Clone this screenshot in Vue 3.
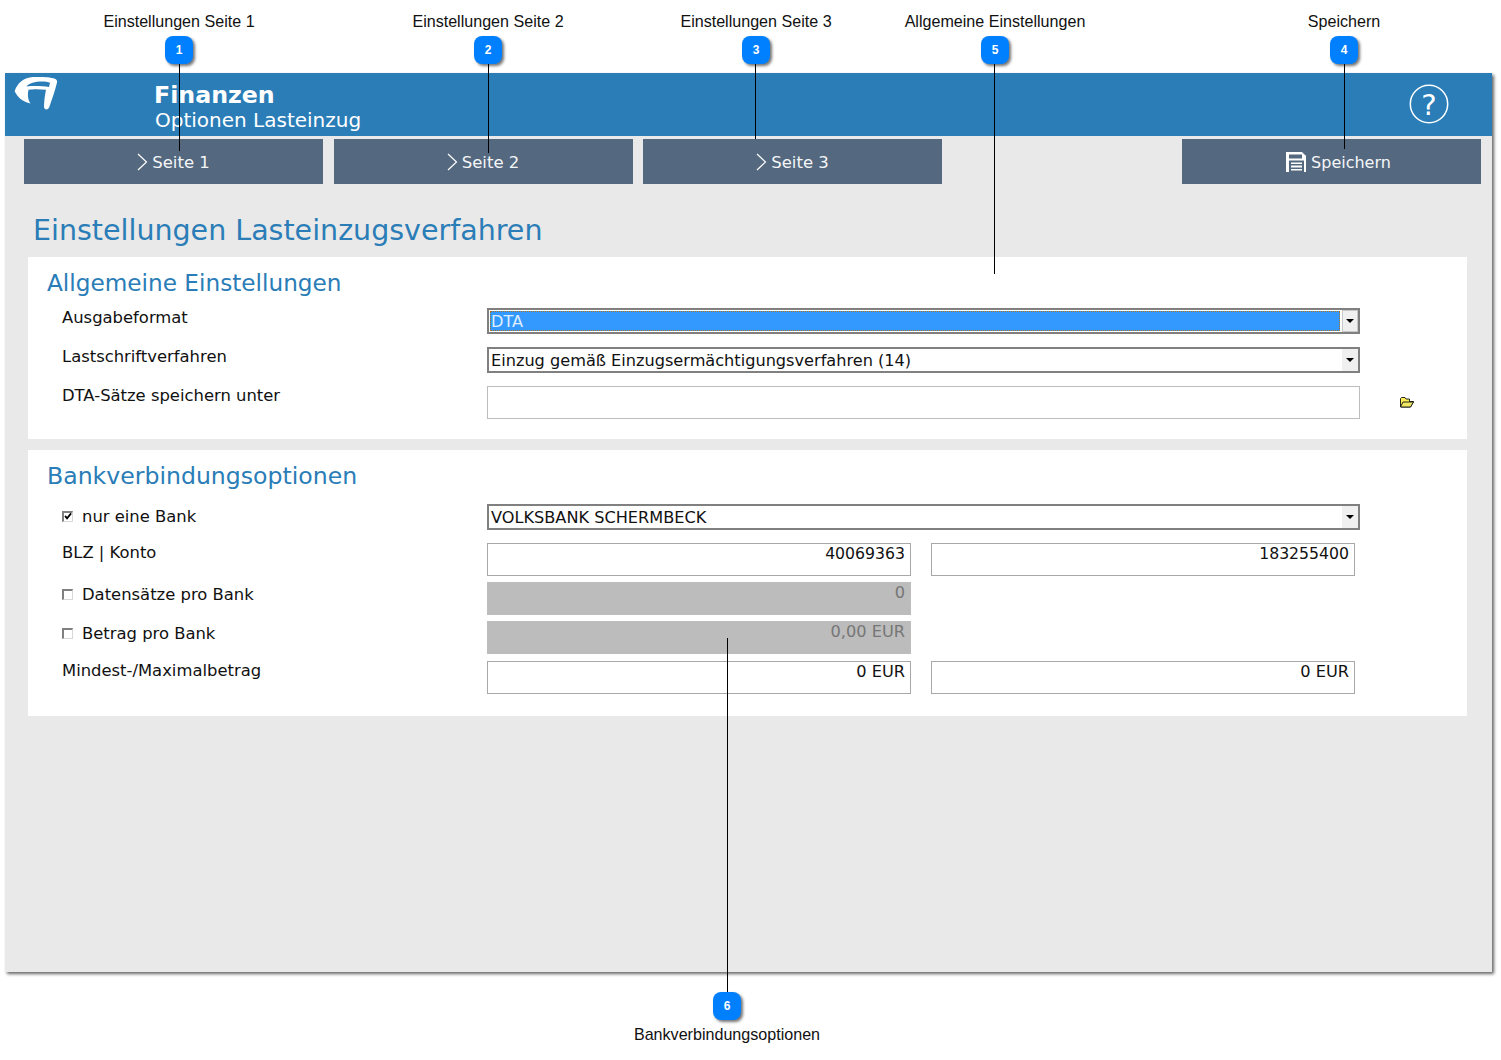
<script setup>
const callouts = [
  { n: 1, label: 'Einstellungen Seite 1', x: 179, lineX: 179, len: 87 },
  { n: 2, label: 'Einstellungen Seite 2', x: 488, lineX: 488, len: 89 },
  { n: 3, label: 'Einstellungen Seite 3', x: 756, lineX: 755, len: 75 },
  { n: 5, label: 'Allgemeine Einstellungen', x: 995, lineX: 994, len: 210 },
  { n: 4, label: 'Speichern', x: 1344, lineX: 1344, len: 85 },
]
const navButtons = ['Seite 1', 'Seite 2', 'Seite 3']
</script>

<template>
  <div class="page">
    <div class="window">
      <header class="head">
        <svg class="logo" viewBox="0 0 44 34" width="44" height="34">
          <path fill="#fff" fill-rule="evenodd" d="M.7 14.300C3 6 10 .5 19 0C26-.3 34 0 38 1C42 1.500 43.500 3 43 5.500C41 14 38 22 35.500 29.500C34.500 33 30.500 33.500 30 30C30 24 31 18 32 12.800C26 12 19 12 14.500 12.800C13.500 17 13.500 22 16.500 26.500C9 25 3 20 .7 14.300ZM12.500 9.500C15 6 21 4.500 28 4.500C31 4.500 34 5 36 5.800L35 10C28 9 19 8.800 12.500 9.500Z" />
        </svg>
        <div class="titles">
          <div class="t1">Finanzen</div>
          <div class="t2">Optionen Lasteinzug</div>
        </div>
        <svg class="help" viewBox="0 0 40 40" width="40" height="40">
          <circle cx="20" cy="20" r="18.700" fill="none" stroke="#fff" stroke-width="1.500" />
          <text x="20" y="31" text-anchor="middle" fill="#fff" font-family="'DejaVu Sans', sans-serif" font-size="29">?</text>
        </svg>
      </header>

      <nav class="toolbar">
        <button v-for="b in navButtons" :key="b" class="btn">
          <svg viewBox="0 0 11 18" width="11" height="18"><path d="M1 1l8.500 8L1 17" fill="none" stroke="#fff" stroke-width="1.200" /></svg>
          <span class="after-chev">{{ b }}</span>
        </button>
        <button class="btn save">
          <svg viewBox="0 0 20 20" width="20" height="20">
            <path fill="#fff" fill-rule="evenodd" d="M0 0H16.500L20 3.500V20H0ZM3 2.500V6.500H16V2.500ZM3 8.500V20H5V10.500H16V12H5V13.500H16V15.500H5V17H16V18.500H5V20H18V8.500Z" />
            <path d="M16.500 0L20 3.500" stroke="#54687f" stroke-width="1" />
          </svg>
          <span class="after-save">Speichern</span>
        </button>
      </nav>

      <h1 class="main-title">Einstellungen Lasteinzugsverfahren</h1>

      <section class="panel p1">
        <h2>Allgemeine Einstellungen</h2>
        <div class="row r-sel">
          <label>Ausgabeformat</label>
          <div class="select focused">
            <span class="sel-text"><span class="hl">DTA</span></span>
            <span class="arrow bevel"><i></i></span>
          </div>
        </div>
        <div class="row r-sel gap13">
          <label>Lastschriftverfahren</label>
          <div class="select">
            <span class="sel-text">Einzug gemäß Einzugsermächtigungsverfahren (14)</span>
            <span class="arrow"><i></i></span>
          </div>
        </div>
        <div class="row r-in gap13">
          <label>DTA-Sätze speichern unter</label>
          <div class="input full"></div>
          <svg class="folder" viewBox="0 0 15 11" width="15" height="11">
            <path fill="#ffee55" stroke="#111" stroke-width=".9" d="M1.500 9.500V1.500L2.500 .5H6L7 2h3.500v2.500H14.500L11.500 10H2Z" />
            <path fill="#f0e765" stroke="#111" stroke-width=".9" d="M1.500 10L4 5H14.500L11.500 10Z" />
          </svg>
        </div>
      </section>

      <section class="panel p2">
        <h2>Bankverbindungsoptionen</h2>
        <div class="row r-sel">
          <label class="chk">
            <span class="box"><svg viewBox="0 0 9 9" width="9" height="9"><path d="M1.200 3.800l2.200 2.700L8 1" fill="none" stroke="#000" stroke-width="2" /></svg></span>
            nur eine Bank
          </label>
          <div class="select">
            <span class="sel-text">VOLKSBANK SCHERMBECK</span>
            <span class="arrow"><i></i></span>
          </div>
        </div>
        <div class="row r-in gap13">
          <label>BLZ | Konto</label>
          <div class="pair">
            <div class="input num">40069363</div>
            <div class="input num">183255400</div>
          </div>
        </div>
        <div class="row r-in gap6">
          <label class="chk"><span class="box"></span>Datensätze pro Bank</label>
          <div class="pair"><div class="input off">0</div></div>
        </div>
        <div class="row r-in gap6">
          <label class="chk"><span class="box"></span>Betrag pro Bank</label>
          <div class="pair"><div class="input off">0,00 EUR</div></div>
        </div>
        <div class="row r-in gap7">
          <label>Mindest-/Maximalbetrag</label>
          <div class="pair">
            <div class="input">0 EUR</div>
            <div class="input">0 EUR</div>
          </div>
        </div>
      </section>
    </div>

    <template v-for="c in callouts" :key="c.n">
      <div class="call-label" :style="{ left: c.x + 'px', top: '13px' }">{{ c.label }}</div>
      <div class="call-line" :style="{ left: c.lineX + 'px', top: '64px', height: c.len + 'px' }"></div>
      <div class="badge" :style="{ left: c.x - 14 + 'px', top: '36px' }">{{ c.n }}</div>
    </template>
    <div class="call-line" style="left:727px;top:638px;height:354px"></div>
    <div class="badge" style="left:713px;top:992px">6</div>
    <div class="call-label" style="left:727px;top:1026px">Bankverbindungsoptionen</div>
  </div>
</template>

<style>
body { margin: 0; background: #fff; }
</style>

<style scoped>
.page {
  position: relative;
  width: 1501px;
  height: 1060px;
  padding-top: 73px;
  box-sizing: border-box;
  overflow: hidden;
  font-family: "DejaVu Sans", Verdana, sans-serif;
  background: #fff;
}
.window {
  margin-left: 5px;
  width: 1487px;
  height: 899px;
  background: #e9e9e9;
  box-shadow: 2px 2px 3px rgba(0, 0, 0, .6);
  display: flex;
  flex-direction: column;
}
.head {
  height: 63px;
  flex: none;
  background: #2a7db7;
  display: flex;
  position: relative;
  color: #fff;
}
.logo { margin: 4px 0 0 9px; flex: none; }
.titles { margin-left: 97px; padding-top: 8px; }
.t1 { font-size: 23.700px; font-weight: 700; line-height: 28px; margin-left: -1px; }
.t2 { font-size: 20px; line-height: 23px; }
.help { margin: 11px 43px 0 auto; }
.toolbar {
  display: flex;
  padding: 3px 11px 0 19px;
  gap: 10.500px;
  flex: none;
}
.btn {
  width: 299px;
  height: 45px;
  border: 0;
  padding: 2px 0 0;
  background: #54687f;
  color: #f4f6f8;
  font: 16.500px "DejaVu Sans", Verdana, sans-serif;
  display: flex;
  align-items: center;
  justify-content: center;
}
.btn svg { margin-top: -2px; }
.after-chev { margin-left: 4px; }
.after-save { margin-left: 5px; }
.btn.save { margin-left: auto; padding-left: 14px; font-size: 16px; }
.main-title {
  margin: 27px 0 0 28px;
  height: 46px;
  color: #2a7db7;
  font-size: 28.500px;
  line-height: 40px;
  font-weight: 400;
}
.panel {
  margin: 0 25px 0 23px;
  background: #fff;
  padding-left: 34px;
}
.panel h2 {
  margin: 0 0 0 -15px;
  color: #2a7db7;
  font-weight: 400;
}
.p1 { height: 182px; }
.p1 h2 { height: 51px; line-height: 51px; font-size: 23.200px; }
.p2 { height: 266px; margin-top: 11px; }
.p2 h2 { height: 54px; line-height: 53px; font-size: 23.600px; }
.row {
  display: flex;
  align-items: flex-start;
  position: relative;
}
.r-sel { height: 26px; }
.r-in { height: 33px; }
.gap13 { margin-top: 13px; }
.gap6 { margin-top: 6px; }
.gap7 { margin-top: 7px; }
.row > label {
  width: 425px;
  flex: none;
  font-size: 16.400px;
  line-height: 18px;
  padding-top: 1px;
  color: #111;
  white-space: nowrap;
}
.row > label.chk {
  display: flex;
  align-items: center;
  padding-top: 4px;
}
.box {
  width: 11px;
  height: 11px;
  margin-top: -2px;
  box-sizing: border-box;
  border: 1px solid #d8d8d8;
  border-top: 2px solid #808080;
  border-left: 2px solid #808080;
  background: #fff;
  margin-right: 9px;
  display: flex;
  align-items: center;
  justify-content: center;
}
.select {
  width: 873px;
  height: 26px;
  box-sizing: border-box;
  border: 2px solid #808080;
  background: #fff;
  display: flex;
  font-size: 16.150px;
  color: #111;
}
.sel-text {
  flex: 1;
  display: block;
  line-height: 24px;
  padding-left: 2px;
  white-space: nowrap;
  overflow: hidden;
}
.focused .sel-text {
  padding: 1px 0 1px 1px;
  line-height: 18px;
  display: flex;
}
.hl {
  flex: 1;
  background: #3399ff;
  color: #dfeeff;
  outline: 1px dotted #a8701c;
  outline-offset: -1px;
  padding-left: 1px;
  line-height: 22px;
}
.arrow {
  width: 16px;
  background: #f0f0f0;
  display: flex;
  align-items: center;
  justify-content: center;
  flex: none;
}
.arrow.bevel {
  margin-left: 2px;
  border: 1px solid #c8c8c8;
  box-sizing: border-box;
}
.arrow i {
  width: 0;
  height: 0;
  border-left: 4px solid transparent;
  border-right: 4px solid transparent;
  border-top: 4px solid #000;
}
.input {
  width: 424px;
  height: 33px;
  box-sizing: border-box;
  border: 1px solid #bdbdbd;
  background: #fff;
  text-align: right;
  padding: 1px 5px 0 0;
  font-size: 16.200px;
  line-height: 18px;
  color: #111;
}
.input.num { font-size: 15.700px; }
.input.full { width: 873px; }
.input.off {
  background: #bcbcbc;
  color: #767676;
}
.pair {
  display: flex;
  gap: 20px;
}
.pair .input:not(.off) { border-color: #a8a8a8; }
.folder {
  margin: 11px 0 0 39px;
  flex: none;
}
.call-label {
  position: absolute;
  transform: translateX(-50%);
  font: 16.100px/16px "Liberation Sans", Arial, sans-serif;
  color: #111;
  white-space: nowrap;
}
.call-line {
  position: absolute;
  width: 1px;
  background: #000;
}
.badge {
  position: absolute;
  width: 28px;
  height: 28px;
  border-radius: 8px;
  background: #0080ff;
  color: #fff;
  font: 700 12px/29px "Liberation Sans", Arial, sans-serif;
  text-align: center;
  box-shadow: 2px 2px 3px rgba(0, 0, 0, .55);
}
</style>
